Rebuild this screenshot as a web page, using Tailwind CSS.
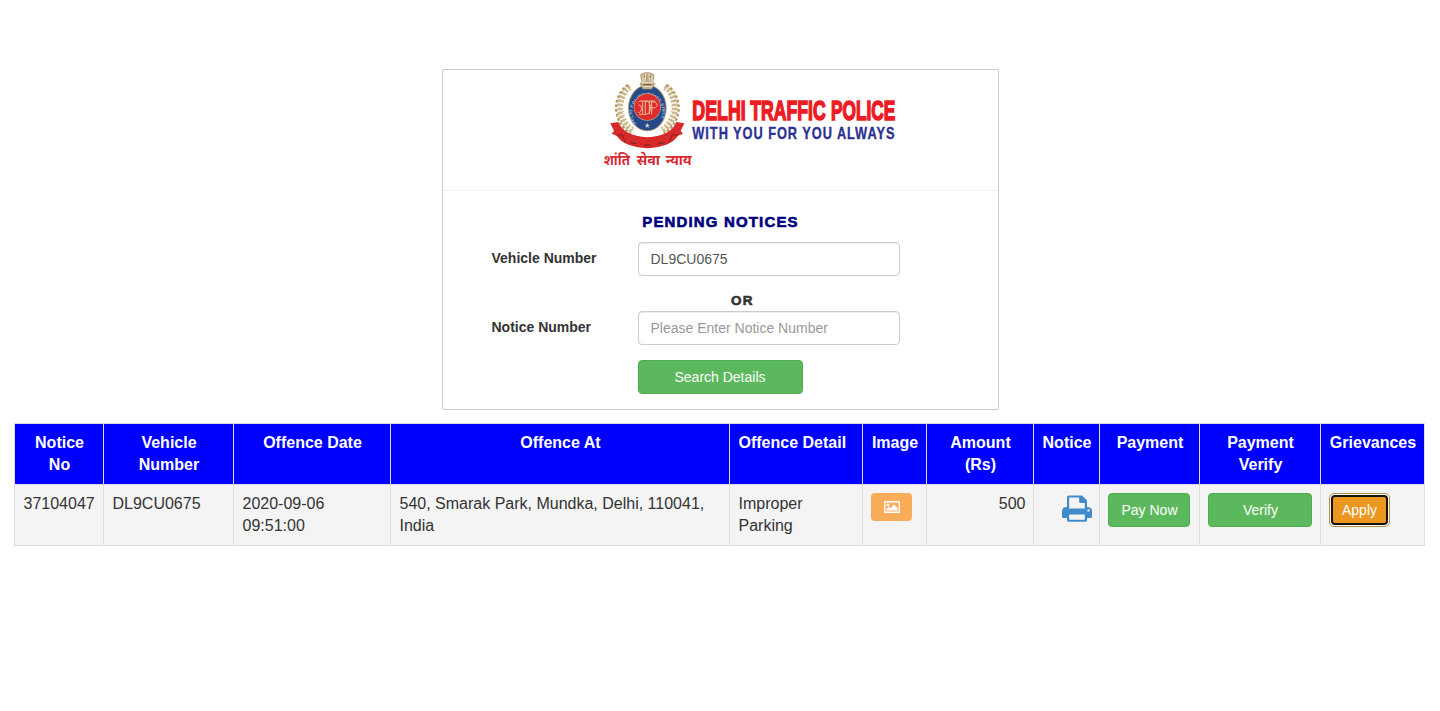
<!DOCTYPE html>
<html lang="en">
<head>
<meta charset="utf-8">
<title>Delhi Traffic Police - Pending Notices</title>
<script src="https://cdn.jsdelivr.net/npm/@tailwindcss/browser@4"></script>
</head>
<body class="h-[711px] overflow-hidden bg-white font-['Liberation_Sans',Arial,sans-serif] text-sm text-[#333]">
<main class="pt-[69px]">
  <section class="ml-[442px] h-[341px] w-[557px] rounded-[2px] border border-[#ccc]">
    <header class="flex h-[121px] items-start border-b border-[#eee] pl-[152px]">
      <svg class="-mt-[5px] block h-[110px] w-[320px] shrink-0 overflow-visible" viewBox="0 0 960 330" role="img" aria-label="Delhi Traffic Police">
        <!-- wreath -->
        <g fill="none" stroke="#b79b63">
          <path d="M106 66C62 92 66 172 116 198M208 66C252 92 248 172 198 198" stroke-width="19" stroke-dasharray="8 4" opacity=".7"/>
          <path d="M99 60C48 94 52 174 108 206M215 60C266 94 262 174 206 206" stroke-width="7" stroke-dasharray="8 6"/>
          <path d="M110 70C76 104 74 164 116 196M204 70C238 104 240 164 198 196" stroke="#fff" stroke-width="4" stroke-dasharray="5 8"/>
        </g>
        <!-- ribbon -->
        <path d="M46 175L70 171Q86 213 157 217Q228 213 244 171L268 175L257 198L264 206L249 212Q228 245 157 250Q86 245 65 212L50 206L57 198Z" fill="#d8292b"/>
        <path d="M65 211L82 209L91 232M249 211L232 209L223 232" fill="none" stroke="#8f1d1d" stroke-width="3"/>
        <path d="M106 232L126 237M147 240H167M188 237L208 232" stroke="#8b2a24" stroke-width="5" fill="none"/>
        <!-- medallion -->
        <ellipse cx="157" cy="129" rx="58" ry="70" fill="#a89873"/>
        <ellipse cx="157" cy="129" rx="55" ry="67" fill="#26498c"/>
        <path id="ring" d="M123 176A45 51 0 1 1 191 176" fill="none"/>
        <text font-size="13" font-weight="700" fill="#a9bad9"><textPath href="#ring" textLength="205">DELHI POLICE RAISE SINCE</textPath></text>
        <circle cx="157" cy="126" r="41" fill="#c4a78a"/>
        <circle cx="157" cy="126" r="39" fill="#df2b2b"/>
        <g fill="none" stroke="#ebbd95" stroke-width="3">
          <path d="M130 112Q132 105 144 108H181M143 109V146M151 109V146M132 148H153Q168 145 166 124Q165 108 151 109M163 109V148M170 109V148M166 111H178Q188 113 187 122Q184 130 170 129M131 120Q139 119 139 130Q139 145 130 142"/>
        </g>
        <path d="M157 174L159 179H165L160 183L162 189L157 185L152 189L154 183L149 179H155Z" fill="#e0d9b6"/>
        <!-- lion capital -->
        <path d="M136 34Q134 25 144 25L149 22H165L170 25Q180 27 178 35L175 51L181 57L176 62L171 73H143L138 62L133 57L139 51Z" fill="#b9a77c"/>
        <path d="M144 31V50M152 25L150 48M162 25L164 48M171 31V50M140 53H174M143 65H171" stroke="#e9dfc5" stroke-width="4" fill="none"/>
        <path d="M147 35H150M164 35H167M146 59H168" stroke="#756843" stroke-width="4"/>
        <g font-family="Noto Sans, Noto Sans Devanagari, sans-serif" font-size="41" font-weight="700" fill="#d52c32">
          <text x="26" y="300" textLength="79" lengthAdjust="spacingAndGlyphs">शांति</text>
          <text x="125" y="300" textLength="70" lengthAdjust="spacingAndGlyphs">सेवा</text>
          <text x="212" y="300" textLength="78" lengthAdjust="spacingAndGlyphs">न्याय</text>
        </g>
        <g font-family="Liberation Sans, sans-serif" font-size="85" font-weight="700" fill="#ed1b24" stroke="#ed1b24" stroke-width="5">
          <text x="292" y="166" textLength="160" lengthAdjust="spacingAndGlyphs">DELHI</text>
          <text x="466" y="166" textLength="226" lengthAdjust="spacingAndGlyphs">TRAFFIC</text>
          <text x="708" y="166" textLength="193" lengthAdjust="spacingAndGlyphs">POLICE</text>
        </g>
        <text transform="translate(292 222) scale(.8 1)" textLength="758" font-family="Liberation Sans, sans-serif" font-size="48" font-weight="700" fill="#2d3192" stroke="#2d3192" stroke-width="1">WITH YOU FOR YOU ALWAYS</text>
      </svg>
    </header>
    <div class="px-[48px] pt-[19px]">
      <h1 class="text-center text-[15px] leading-[23px] font-black tracking-[1.15px] text-[#000080] [-webkit-text-stroke:.6px_#000080]">PENDING NOTICES</h1>
      <form>
        <div class="mt-[9px] flex">
          <label class="w-[147px] pt-[6px] pl-[.5px] leading-5 font-bold">Vehicle Number</label>
          <input class="h-[34px] w-[262px] rounded border border-[#ccc] px-[11.5px] text-[#555] shadow-[inset_0_1px_1px_rgba(0,0,0,.075)]" value="DL9CU0675">
        </div>
        <p class="mt-[15px] ml-[240px] h-5 text-[13.5px] leading-5 font-black tracking-[1.2px] [-webkit-text-stroke:.6px_#333]">OR</p>
        <div class="flex">
          <label class="w-[147px] pt-[6px] pl-[.5px] leading-5 font-bold">Notice Number</label>
          <input class="h-[34px] w-[262px] rounded border border-[#ccc] px-[11.5px] shadow-[inset_0_1px_1px_rgba(0,0,0,.075)] placeholder:text-[#999]" placeholder="Please Enter Notice Number">
        </div>
        <button type="button" class="mt-[15px] ml-[147px] block h-[34px] w-[165px] rounded border border-[#4cae4c] bg-[#5cb85c] pr-px text-white">Search Details</button>
      </form>
    </div>
  </section>

  <table class="mt-[13px] ml-[14px] w-[1411px] table-fixed border-collapse text-base leading-[22px] [&_td]:border [&_td]:border-[#ddd] [&_td]:py-2 [&_td]:pr-[7.5px] [&_td]:pl-[8.5px] [&_td]:align-top [&_th]:border [&_th]:border-[#ddd] [&_th]:py-2 [&_th]:pr-[7.5px] [&_th]:pl-[8.5px] [&_th]:align-top">
    <colgroup><col class="w-[89px]"><col class="w-[130px]"><col class="w-[157px]"><col class="w-[339px]"><col class="w-[133px]"><col class="w-[64px]"><col class="w-[107px]"><col class="w-[66px]"><col class="w-[100px]"><col class="w-[121px]"><col class="w-[104px]"></colgroup>
    <thead>
      <tr class="h-[61px] bg-[#0000ff] text-white">
        <th>Notice<br>No</th><th>Vehicle<br>Number</th><th>Offence Date</th><th>Offence At</th><th class="text-left whitespace-nowrap">Offence Detail</th><th>Image</th><th>Amount<br>(Rs)</th><th>Notice</th><th>Payment</th><th>Payment<br>Verify</th><th>Grievances</th>
      </tr>
    </thead>
    <tbody>
      <tr class="h-[61px] bg-[#f4f4f4]">
        <td>37104047</td>
        <td>DL9CU0675</td>
        <td>2020-09-06<br>09:51:00</td>
        <td>540, Smarak Park, Mundka, Delhi, 110041,<br>India</td>
        <td>Improper<br>Parking</td>
        <td>
          <button class="-ml-[.5px] flex h-7 w-[41px] items-center justify-center rounded bg-[#f9ac59]" aria-label="View image">
            <svg class="h-3 w-4" viewBox="0 0 16 12" fill="none"><path d="M.75.75H15.25V11.25H.75Z" stroke="#fff" stroke-width="1.3"/><circle cx="4" cy="4" r="1.4" fill="#fff"/><path d="M2.5 9.5V8L5 5.8L6.5 7.2L10 3.5L13.5 7V9.5Z" fill="#fff"/></svg>
          </button>
        </td>
        <td class="text-right">500</td>
        <td>
          <svg class="mt-[2px] ml-auto block h-[27px] w-[30px]" viewBox="0 0 30 27" fill="#428bca"><path fill-rule="evenodd" d="M7 .5H20L25 5.5V12Q30 12 30 16V22Q30 23 29 23H25V25Q25 26.7 23.5 26.7H6.5Q5 26.7 5 25V23H1Q0 23 0 22V16Q0 12 5 12V2.5Q5 .5 7 .5ZM7.2 2.5V13.5H22.8V8H18.5Q17.2 8 17.2 6.7V2.5ZM7.2 19.5V24.7H22.8V19.5ZM26.5 14.2A1.2 1.2 0 1 0 26.5 16.6A1.2 1.2 0 1 0 26.5 14.2Z"/></svg>
        </td>
        <td><button class="-ml-[.5px] block h-[34px] w-[82px] rounded border border-[#4cae4c] bg-[#5cb85c] pl-px text-sm text-white">Pay Now</button></td>
        <td><button class="-ml-[.5px] block h-[34px] w-[104px] rounded border border-[#4cae4c] bg-[#5cb85c] pl-px text-sm text-white">Verify</button></td>
        <td><button class="-ml-[.5px] block h-[34px] w-[61px] rounded-[5px] border border-[#b98b3e] bg-white p-px"><span class="block h-[30px] rounded-[4px] border-2 border-[#151310] bg-[#ec971f] text-sm leading-[26px] text-white">Apply</span></button></td>
      </tr>
    </tbody>
  </table>
</main>
</body>
</html>
